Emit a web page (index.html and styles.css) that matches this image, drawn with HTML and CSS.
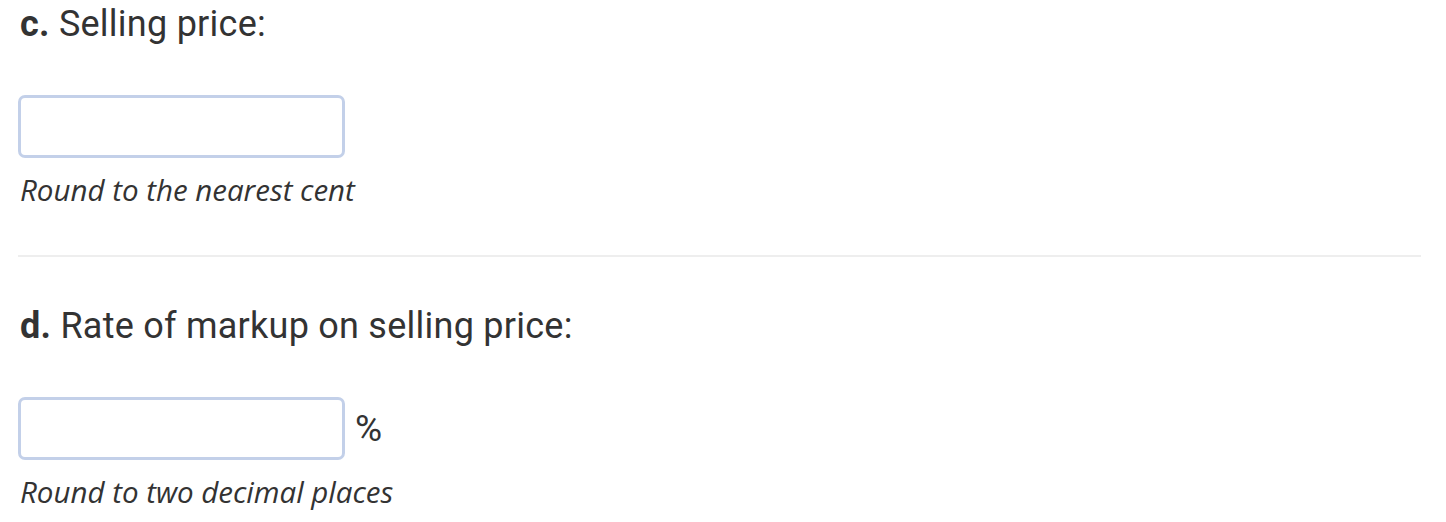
FILE: index.html
```html
<!DOCTYPE html>
<html>
<head>
<meta charset="utf-8">
<link rel="stylesheet" href="styles.css">
</head>
<body>
<div class="page">
  <section class="part">
    <h2 class="q"><b>c.</b> Selling price:</h2>
    <div class="answer">
      <input class="field" type="text">
    </div>
    <p class="hint">Round to the nearest cent</p>
  </section>
  <hr class="sep">
  <section class="part">
    <h2 class="q"><b>d.</b> Rate of markup on selling price:</h2>
    <div class="answer">
      <input class="field" type="text">
      <span class="unit">%</span>
    </div>
    <p class="hint">Round to two decimal places</p>
  </section>
</div>
</body>
</html>
```
FILE: styles.css
```css
html, body { margin: 0; padding: 0; background: #fff; }
body { color: #333; font-family: Roboto, "Noto Sans", sans-serif; }
.page { padding: 0 25px 0 18px; }
.part { display: flex; flex-direction: column; }
.q {
  margin: 2px 0 0 2px;
  font-size: 36px;
  line-height: 44px;
  font-weight: 400;
  letter-spacing: 0.25px;
}
.q b { font-weight: 700; }
.answer {
  display: flex;
  align-items: center;
  gap: 10px;
  margin-top: 49px;
}
.field {
  box-sizing: border-box;
  width: 327px;
  height: 63px;
  border: 3px solid #c3d0e9;
  border-radius: 7px;
  background: #fff;
  margin: 0;
  padding: 0 12px;
  font-size: 26px;
}
.unit { font-size: 37px; line-height: 44px; }
.hint {
  margin: 14px 0 0 2px;
  font-family: "Open Sans", sans-serif;
  font-style: italic;
  font-size: 29.5px;
  line-height: 36px;
}
.sep {
  border: 0;
  height: 2px;
  background: #eeeeee;
  margin: 47px 0 45px 0;
}
```
